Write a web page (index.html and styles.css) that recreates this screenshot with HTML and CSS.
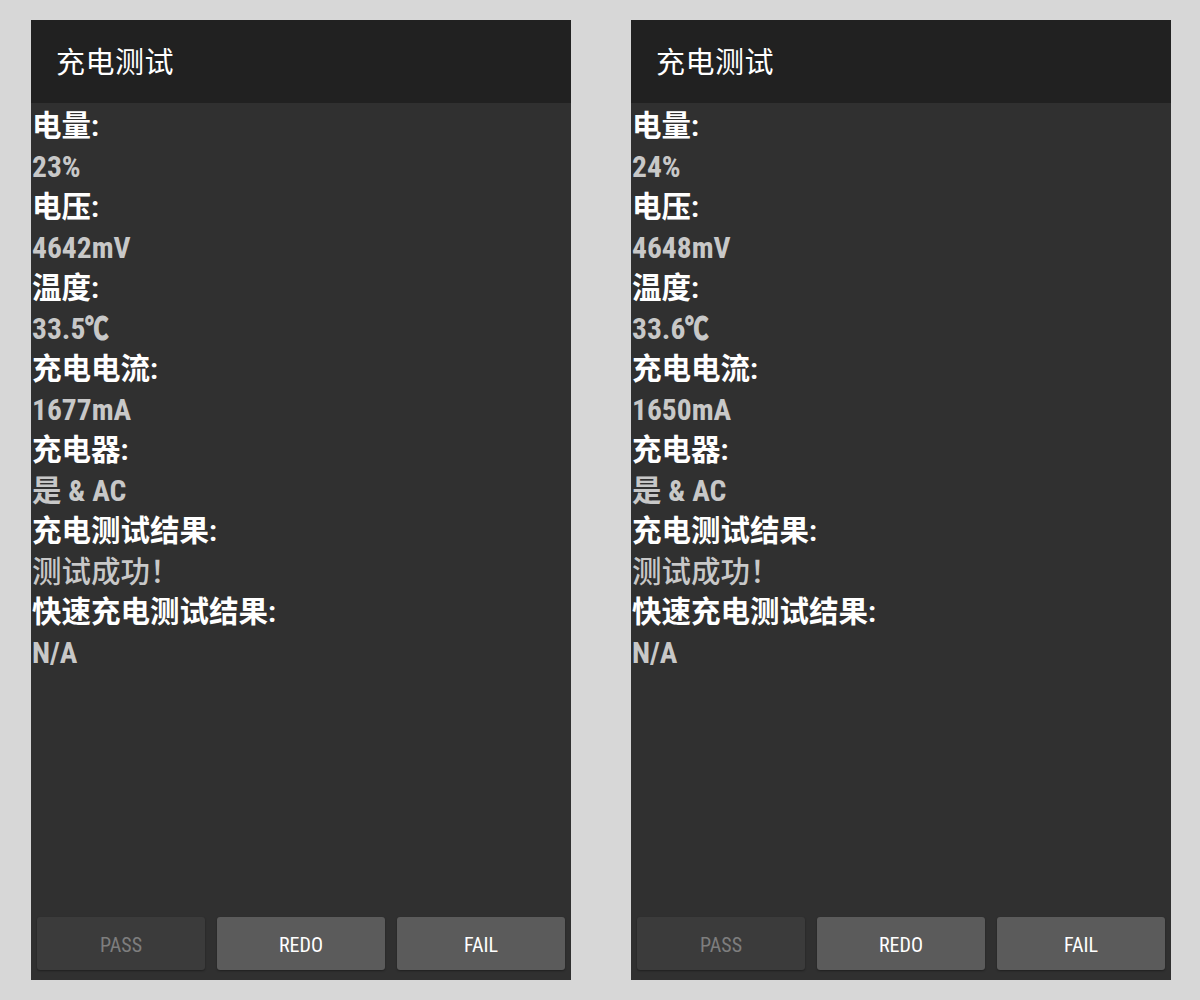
FILE: index.html
```html
<!DOCTYPE html>
<html lang="zh-CN">
<head>
    <meta charset="UTF-8">
    <title>充电测试</title>
    <link rel="stylesheet" href="styles.css">
</head>
<body>
    <div class="screens">
        <div class="screen">
            <div class="app-bar">充电测试</div>
            <div class="content">
                <div class="label">电量:</div>
                <div class="value">23%</div>
                <div class="label">电压:</div>
                <div class="value">4642mV</div>
                <div class="label">温度:</div>
                <div class="value">33.5<span class="unit">℃</span></div>
                <div class="label">充电电流:</div>
                <div class="value">1677mA</div>
                <div class="label">充电器:</div>
                <div class="value">是 &amp; AC</div>
                <div class="label">充电测试结果:</div>
                <div class="value value-light">测试成功！</div>
                <div class="label">快速充电测试结果:</div>
                <div class="value">N/A</div>
            </div>
            <div class="button-bar">
                <button class="btn" disabled>PASS</button>
                <button class="btn">REDO</button>
                <button class="btn">FAIL</button>
            </div>
        </div>

        <div class="screen">
            <div class="app-bar">充电测试</div>
            <div class="content">
                <div class="label">电量:</div>
                <div class="value">24%</div>
                <div class="label">电压:</div>
                <div class="value">4648mV</div>
                <div class="label">温度:</div>
                <div class="value">33.6<span class="unit">℃</span></div>
                <div class="label">充电电流:</div>
                <div class="value">1650mA</div>
                <div class="label">充电器:</div>
                <div class="value">是 &amp; AC</div>
                <div class="label">充电测试结果:</div>
                <div class="value value-light">测试成功！</div>
                <div class="label">快速充电测试结果:</div>
                <div class="value">N/A</div>
            </div>
            <div class="button-bar">
                <button class="btn" disabled>PASS</button>
                <button class="btn">REDO</button>
                <button class="btn">FAIL</button>
            </div>
        </div>
    </div>
</body>
</html>
```

FILE: styles.css
```css
:root {
    --page-bg: #d7d7d7;
    --app-bar-bg: #212121;
    --screen-bg: #303030;
    --btn-bg: #5b5b5b;
    --btn-disabled-bg: #3b3b3b;
    --text-label: #ffffff;
    --text-value: #c8c8c8;
    --text-disabled: #7e7e7e;
}

* {
    margin: 0;
    padding: 0;
    box-sizing: border-box;
}

body {
    background: var(--page-bg);
    font-family: Roboto, "Noto Sans CJK SC", sans-serif;
    height: 1000px;
}

.screens {
    display: flex;
    gap: 60px;
    padding: 20px 0 0 31px;
}

.screen {
    width: 540px;
    height: 960px;
    background: var(--screen-bg);
    display: flex;
    flex-direction: column;
}

.app-bar {
    height: 83px;
    background: var(--app-bar-bg);
    color: #fff;
    font-size: 29px;
    line-height: 87px;
    padding-left: 25px;
    letter-spacing: 0.5px;
}

.content {
    flex: 1;
    padding: 3px 0 0 1px;
}

.label,
.value {
    height: 40.5px;
    line-height: 40.5px;
    white-space: nowrap;
}

.label {
    color: var(--text-label);
    font-size: 29.5px;
    font-weight: 700;
}

.value {
    color: var(--text-value);
    font-family: "Roboto Condensed", Roboto, "Noto Sans CJK SC", sans-serif;
    font-stretch: condensed;
    font-size: 29.5px;
    font-weight: 700;
}

/* the degree sign sits tight against the C, and the fallback glyph has no bold */
.value .unit {
    display: inline-block;
    transform: scaleX(0.8);
    transform-origin: left center;
    -webkit-text-stroke: 1.2px currentColor;
}

.value-light {
    font-weight: 500;
}

.button-bar {
    display: flex;
    gap: 12px;
    padding: 0 6px 10px;
}

.btn {
    flex: 1;
    height: 53px;
    border: none;
    border-radius: 3px;
    background: var(--btn-bg);
    color: #fff;
    font-family: "Roboto Condensed", Roboto, sans-serif;
    font-stretch: condensed;
    font-size: 20px;
    padding-top: 2px;
    box-shadow: 0 1px 2px rgba(0, 0, 0, 0.35);
}

.btn:disabled {
    background: var(--btn-disabled-bg);
    color: var(--text-disabled);
}
```
